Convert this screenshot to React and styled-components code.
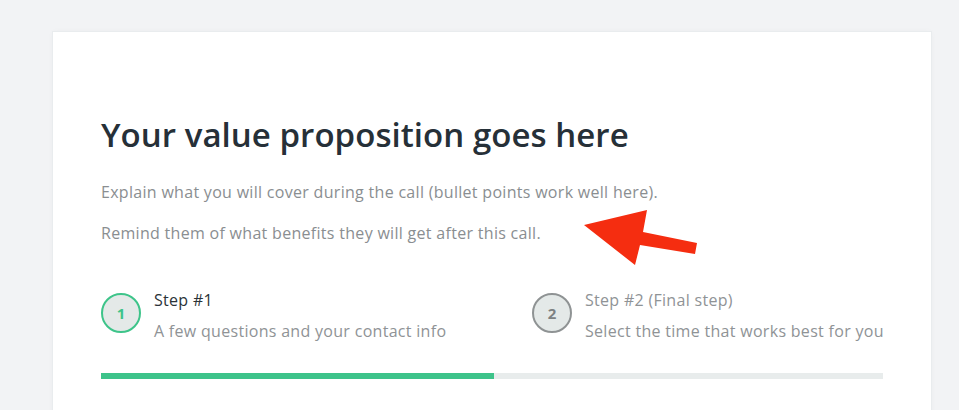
import React from 'react';
import styled, { createGlobalStyle } from 'styled-components';

const GlobalStyle = createGlobalStyle`
  html, body {
    margin: 0;
    padding: 0;
    background: #f2f3f5;
    font-family: "Open Sans", "Liberation Sans", sans-serif;
  }
`;

const Page = styled.div`
  padding: 32px 0 0 53px;
  height: 410px;
  box-sizing: border-box;
  overflow: hidden;
`;

const Card = styled.div`
  position: relative;
  width: 878px;
  min-height: 400px;
  box-sizing: border-box;
  background: #fff;
  box-shadow: 0 0 0 1px #e9ecee, 0 0 6px rgba(0, 0, 0, 0.04);
  padding: 83px 48px 0;
`;

const Title = styled.h1`
  margin: 0;
  font-size: 33px;
  line-height: 40px;
  font-weight: 600;
  color: #263038;
  letter-spacing: 0.05px;
`;

const Lead = styled.p`
  margin: ${p => (p.first ? '25px' : '17px')} 0 0;
  font-size: 16px;
  line-height: 24px;
  letter-spacing: 0.3px;
  color: #8a8e91;
`;

const Steps = styled.div`
  display: grid;
  grid-template-columns: 431px 1fr;
  margin-top: 44px;
`;

const Step = styled.div`
  display: flex;
  align-items: flex-start;
  gap: 13px;
`;

const Badge = styled.div`
  flex: none;
  width: 36px;
  height: 36px;
  margin-top: 4px;
  border-radius: 50%;
  border: 2px solid ${p => (p.active ? '#3ec48a' : '#8f9394')};
  background: #e4e9e8;
  color: ${p => (p.active ? '#3ec48a' : '#7d8182')};
  display: flex;
  align-items: center;
  justify-content: center;
  font-size: 15px;
  font-weight: 700;
`;

const StepText = styled.div`
  display: flex;
  flex-direction: column;
  gap: 9px;
  white-space: nowrap;
`;

const StepTitle = styled.div`
  font-size: 16px;
  line-height: 22px;
  letter-spacing: 0.3px;
  color: ${p => (p.active ? '#2b3338' : '#8f9396')};
`;

const StepSub = styled.div`
  font-size: 16px;
  line-height: 22px;
  letter-spacing: 0.3px;
  color: #8f9396;
`;

const Track = styled.div`
  margin-top: 31px;
  height: 6px;
  background: #e8ecec;
`;

const Fill = styled.div`
  height: 100%;
  background: #3dc38a;
`;

const Arrow = styled.svg`
  position: absolute;
  left: 531px;
  top: 177px;
  width: 120px;
  height: 70px;
`;

const steps = [
  { n: 1, title: 'Step #1', sub: 'A few questions and your contact info', active: true },
  { n: 2, title: 'Step #2 (Final step)', sub: 'Select the time that works best for you', active: false },
];

const App = () => (
  <>
    <GlobalStyle />
    <Page>
      <Card>
        <Title>Your value proposition goes here</Title>
        <Lead first>Explain what you will cover during the call (bullet points work well here).</Lead>
        <Lead>Remind them of what benefits they will get after this call.</Lead>
        <Steps>
          {steps.map(s => (
            <Step key={s.n}>
              <Badge active={s.active}>{s.n}</Badge>
              <StepText>
                <StepTitle active={s.active}>{s.title}</StepTitle>
                <StepSub>{s.sub}</StepSub>
              </StepText>
            </Step>
          ))}
        </Steps>
        <Track>
          <Fill style={{ width: '50.2%' }} />
        </Track>
        {/* red annotation arrow */}
        <Arrow viewBox="531 177 120 70">
          <polygon
            points="584,225 647,210 643,232 697,243 695,254 640,245 635,265"
            fill="#f52d10"
            transform="translate(-53 -32)"
          />
        </Arrow>
      </Card>
    </Page>
  </>
);

export default App;
